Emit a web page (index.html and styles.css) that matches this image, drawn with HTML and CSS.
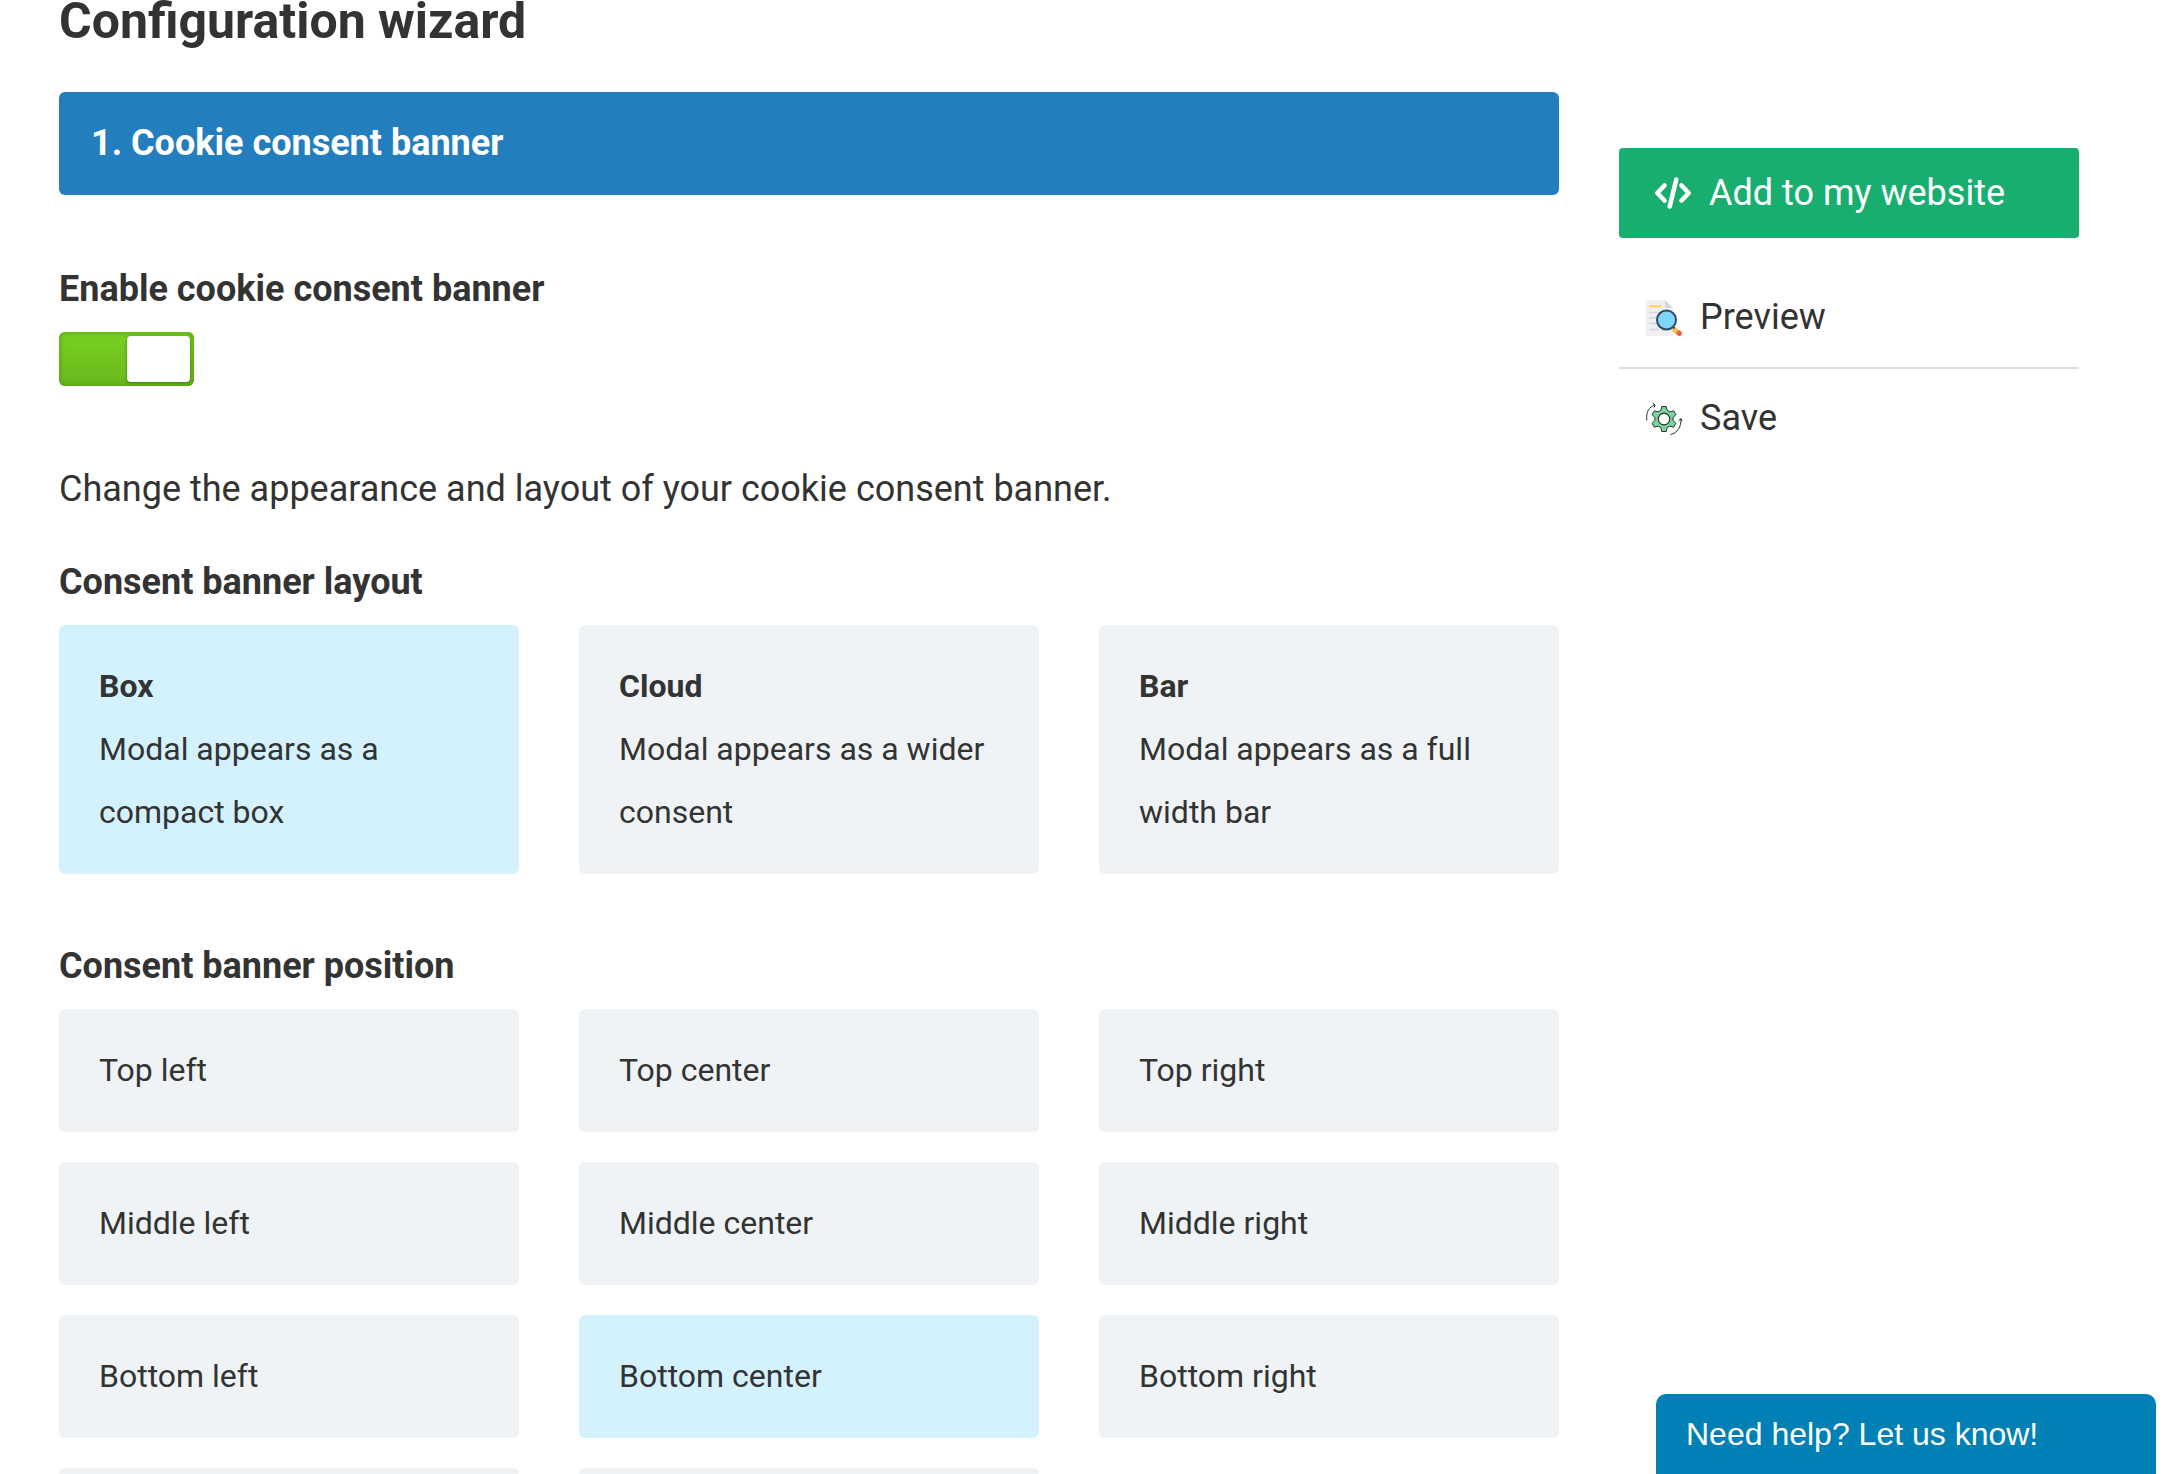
FILE: index.html
```html
<!DOCTYPE html>
<html lang="en">
<head>
<meta charset="utf-8">
<meta name="viewport" content="width=device-width, initial-scale=1">
<title>Configuration wizard</title>
<link rel="stylesheet" href="styles.css">
</head>
<body>
<div class="page">
  <main class="wizard">
    <h1 class="title">Configuration wizard</h1>
    <h2 class="step">1. Cookie consent banner</h2>

    <div class="field">
      <label class="heading" for="enable">Enable cookie consent banner</label>
      <input class="switch" type="checkbox" role="switch" id="enable" checked>
    </div>

    <p class="intro">Change the appearance and layout of your cookie consent banner.</p>

    <fieldset class="group">
      <legend class="heading">Consent banner layout</legend>
      <div class="options">
        <label class="option"><input type="radio" name="layout" checked><strong>Box</strong><span>Modal appears as a compact box</span></label>
        <label class="option"><input type="radio" name="layout"><strong>Cloud</strong><span>Modal appears as a wider consent</span></label>
        <label class="option"><input type="radio" name="layout"><strong>Bar</strong><span>Modal appears as a full width bar</span></label>
      </div>
    </fieldset>

    <fieldset class="group">
      <legend class="heading">Consent banner position</legend>
      <div class="options">
        <label class="option"><input type="radio" name="position"><span>Top left</span></label>
        <label class="option"><input type="radio" name="position"><span>Top center</span></label>
        <label class="option"><input type="radio" name="position"><span>Top right</span></label>
        <label class="option"><input type="radio" name="position"><span>Middle left</span></label>
        <label class="option"><input type="radio" name="position"><span>Middle center</span></label>
        <label class="option"><input type="radio" name="position"><span>Middle right</span></label>
        <label class="option"><input type="radio" name="position"><span>Bottom left</span></label>
        <label class="option"><input type="radio" name="position" checked><span>Bottom center</span></label>
        <label class="option"><input type="radio" name="position"><span>Bottom right</span></label>
        <label class="option"><input type="radio" name="position" aria-label="Top"></label>
        <label class="option"><input type="radio" name="position" aria-label="Bottom"></label>
      </div>
    </fieldset>
  </main>

  <aside class="sidebar">
    <button class="add" type="button">
      <svg class="icon" viewBox="0 0 36 36" fill="none" stroke="#fff" stroke-width="4.600" stroke-linecap="round" stroke-linejoin="round" aria-hidden="true">
        <path d="M9.500 10.500 2.300 18l7.200 7.500M26.500 10.500 33.700 18l-7.200 7.500M21.300 4.500 14.700 31.500"/>
      </svg>
      Add to my website
    </button>
    <ul class="actions">
      <li>
        <button class="action" type="button">
          <svg class="icon" viewBox="0 0 36 36" aria-hidden="true">
            <path fill="#f0f0f3" d="M0 0h19l8 8v28H0z"/>
            <path fill="#d5d6e2" d="M19 0l8 8h-8z"/>
            <path fill="#fcd670" d="M3 5h12.500v2.500H3z"/>
            <path stroke="#d3d5df" stroke-width="1.500" d="M3 12.500h13M3 18h9M3 23.500h9M3 29.500h10"/>
            <path stroke="#fbc04c" stroke-width="5" d="M27.500 28.500l5 5"/>
            <path stroke="#ee6146" stroke-width="5" stroke-linecap="round" d="M33 33l.500.500"/>
            <path stroke="#344b5e" stroke-width="2" d="M26 26l2.500 2.500"/>
            <circle cx="20.500" cy="20" r="9.500" fill="#7fd5fa" stroke="#2f4a60" stroke-width="2"/>
          </svg>
          Preview
        </button>
      </li>
      <li>
        <button class="action" type="button">
          <svg class="icon" viewBox="0 0 36 36" fill="none" stroke="#24352b" stroke-linejoin="round" aria-hidden="true">
            <path fill="#7dd49d" stroke-width="1" d="M14.800 9.400 15.800 5.500h4.400L21.200 9.400 23.900 10.900 27.700 9.800 29.900 13.700 27.100 16.500V19.500L29.900 22.300 27.700 26.200 23.900 25.100 21.200 26.600 20.200 30.500H15.800L14.800 26.600 12.100 25.100 8.300 26.200 6.100 22.300 8.900 19.500V16.500L6.100 13.700 8.300 9.800 12.100 10.900z"/>
            <circle cx="18" cy="18" r="5.800" fill="#fff" stroke-width="1.200"/>
            <path stroke-width="1" d="M.800 19.500C-.200 11.500 3 5.500 9 4.200M6.500 1.800 9.200 4.200 8 6.500M35 18c.200 8-3.500 14-10.500 15.500M32.500 19.800 35 17.500l1 2.800"/>
          </svg>
          Save
        </button>
      </li>
    </ul>
  </aside>
</div>
<button class="help" type="button">Need help? Let us know!</button>
</body>
</html>
```

FILE: styles.css
```css
* {
  box-sizing: border-box;
}

html {
  scrollbar-width: none;
}

body {
  margin: 0;
  background: #fff;
  color: #333;
  font-family: Roboto, "Liberation Sans", sans-serif;
  font-size: 36px;
  line-height: 63px;
}

button {
  border: 0;
  background: none;
  color: inherit;
  font: inherit;
  text-align: left;
  cursor: pointer;
}

.page {
  display: grid;
  grid-template-columns: repeat(4, minmax(0, 1fr));
  align-items: start;
  gap: 60px;
  padding: 0 105px 60px 59px;
}

.wizard {
  grid-column: span 3;
}

.title {
  margin: 0 0 50px;
  font-size: 50px;
  line-height: 42px;
}

.step {
  margin: 0 0 63px;
  padding: 20px 32px;
  border-radius: 6px;
  background: #237ebd;
  color: #fff;
  font-size: 36px;
}

.heading {
  display: block;
  margin-bottom: 11px;
  padding: 0;
  font-weight: 700;
}

.switch {
  appearance: none;
  display: flex;
  justify-content: flex-end;
  width: 135px;
  height: 54px;
  margin: 0;
  padding: 4px;
  border-radius: 6px;
  background: linear-gradient(#7ad120, #69b81e);
  box-shadow: inset 0 0 6px #4f9a10;
}

.switch::before {
  content: "";
  width: 63px;
  border-radius: 4px;
  background: #fff;
  box-shadow: 0 1px 3px #3f7d0c;
}

.switch:not(:checked) {
  justify-content: flex-start;
  background: #ccc;
}

.intro {
  margin: 72px 0 30px;
}

.group {
  min-width: 0;
  margin: 0 0 61px;
  padding: 0;
  border: 0;
}

.options {
  display: grid;
  grid-template-columns: repeat(3, minmax(0, 1fr));
  gap: 30px 60px;
}

.option {
  display: flex;
  flex-direction: column;
  min-height: 123px;
  padding: 30px 40px;
  border-radius: 6px;
  background: #eff3f6;
  font-size: 32px;
  cursor: pointer;
}

.option input {
  appearance: none;
  width: 0;
  height: 0;
  margin: 0;
}

.option:has(:checked) {
  background: #d4f2fe;
}

.sidebar {
  padding-top: 148px;
}

.icon {
  flex: none;
  width: 36px;
  height: 36px;
  overflow: visible;
}

.add {
  display: flex;
  align-items: center;
  gap: 18px;
  width: 100%;
  height: 90px;
  padding: 0 36px;
  border-radius: 4px;
  background: #17ae70;
  color: #fff;
}

.actions {
  margin: 30px 0 0;
  padding: 0;
  list-style: none;
}

.actions li + li {
  border-top: 2px solid #dfdfdf;
}

.action {
  display: flex;
  align-items: center;
  gap: 18px;
  width: 100%;
  height: 99px;
  padding: 0 27px;
}

.help {
  position: fixed;
  right: 28px;
  bottom: 0;
  width: 500px;
  height: 80px;
  padding: 0 30px;
  border-radius: 10px 10px 0 0;
  background: #0080b4;
  color: #fff;
  font-family: "Liberation Sans", Arial, sans-serif;
  font-size: 32px;
}
```
